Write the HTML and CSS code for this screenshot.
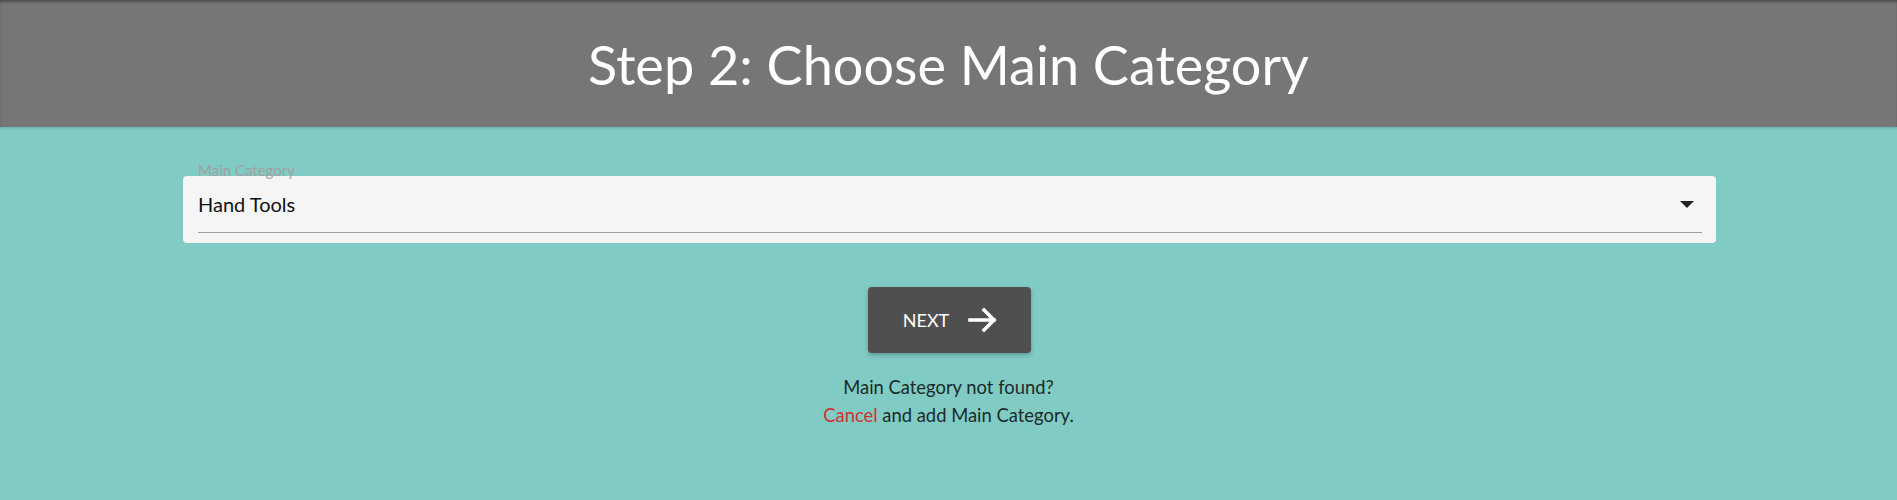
FILE: index.html
```html
<!DOCTYPE html>
<html lang="en">
<head>
<meta charset="utf-8">
<title>Step 2: Choose Main Category</title>
<link rel="stylesheet" href="styles.css">
</head>
<body>
<header class="header">
  <h1 class="title">Step 2: Choose Main Category</h1>
</header>
<main class="main">
  <div class="field">
    <label class="field-label">Main Category</label>
    <div class="field-input">
      <span class="field-value">Hand Tools</span>
      <span class="caret"></span>
    </div>
  </div>
  <button class="next-btn" type="button">
    <span>NEXT</span>
    <svg class="arrow" width="30" height="26" viewBox="0 0 30 26" aria-hidden="true">
      <path d="M2 13 H26 M16 3 L26 13 L16 23" fill="none" stroke="#fff" stroke-width="3.6" stroke-linecap="square" stroke-linejoin="miter"/>
    </svg>
  </button>
  <p class="help">Main Category not found?<br><a class="cancel" href="#">Cancel</a> and add Main Category.</p>
</main>
</body>
</html>
```
FILE: styles.css
```css
html, body {
  margin: 0;
  padding: 0;
}
body {
  background: #80cbc4;
  font-family: Lato, "Open Sans", sans-serif;
  min-height: 500px;
}
.header {
  height: 127px;
  background: #767676;
  display: flex;
  align-items: center;
  justify-content: center;
  box-shadow: inset 0 3px 3px -1px rgba(0,0,0,0.35), 0 1px 3px rgba(0,0,0,0.2);
  position: relative;
}
.title {
  margin: 0;
  color: #fff;
  font-weight: 400;
  font-size: 54px;
  line-height: 64px;
  padding-top: 3px;
}
.main {
  padding-top: 49px;
  display: flex;
  flex-direction: column;
  align-items: center;
}
.field {
  position: relative;
  align-self: stretch;
  margin: 0 181px 0 183px;
  background: #f5f5f5;
  border-radius: 4px;
  padding: 0 14px 10px 15px;
}
.field-label {
  position: absolute;
  left: 15px;
  top: -13px;
  font-size: 15px;
  line-height: 14px;
  color: #a0a0a0;
}
.field-input {
  display: flex;
  align-items: center;
  justify-content: space-between;
  padding: 16px 0;
  border-bottom: 1px solid #9e9e9e;
}
.field-value {
  font-size: 20px;
  line-height: 24px;
  color: #111;
}
.caret {
  width: 0;
  height: 0;
  border-left: 7px solid transparent;
  border-right: 7px solid transparent;
  border-top: 7px solid #222;
  margin-right: 8px;
}
.next-btn {
  margin-top: 44px;
  margin-left: 2px;
  height: 66px;
  padding: 0 33px 0 35px;
  display: flex;
  align-items: center;
  gap: 19px;
  background: #4f4f4f;
  color: #fff;
  border: none;
  border-radius: 4px;
  font-family: Lato, sans-serif;
  font-size: 18px;
  box-shadow: 0 2px 4px rgba(0,0,0,0.25);
  cursor: pointer;
}
.arrow {
  display: block;
}
.help {
  margin: 20px 0 0;
  text-align: center;
  font-size: 18.4px;
  line-height: 28px;
  color: #1d2a2a;
}
.cancel {
  color: #d32f2f;
  text-decoration: none;
}
```
